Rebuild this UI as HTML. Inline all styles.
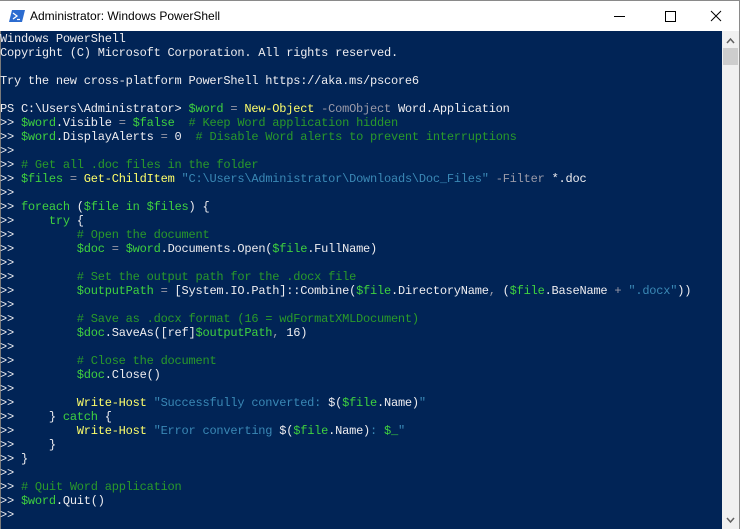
<!DOCTYPE html>
<html><head><meta charset="utf-8"><style>
html,body{margin:0;padding:0;width:740px;height:529px;overflow:hidden;background:#fff;}
.title{position:absolute;left:0;top:0;width:740px;height:31px;background:#fff;border-top:1px solid #8a8a8a;box-sizing:border-box;}
.title .t{position:absolute;left:30px;top:8px;font:12px "Liberation Sans",sans-serif;color:#000;}
.con{position:absolute;left:0;top:31px;width:722px;height:498px;background:#012456;border-left:1px solid #7a7a7a;box-sizing:border-box;}
pre{margin:0;position:absolute;left:0;top:32px;font:12px/14px "Liberation Mono",monospace;letter-spacing:-0.22px;color:#eeedf0;}
.sb{position:absolute;left:722px;top:31px;width:17px;height:498px;background:#f0f0f0;}
.rb{position:absolute;left:739px;top:0;width:1px;height:529px;background:#8a8a8a;}
.v{color:#3fd13f}.c{color:#ffff6a}.m{color:#2a9a2a}.s{color:#3a88b5}.o{color:#9a9aa8}
</style></head><body>
<div class="title">
<svg style="position:absolute;left:9px;top:9px" width="16" height="12" viewBox="0 0 16 12"><polygon points="3,0 16,0 13,12 0,12" fill="#2c6cd0"/><polyline points="4,3 8,6 4,9" fill="none" stroke="#fff" stroke-width="1.3"/><line x1="8" y1="9.5" x2="11" y2="9.5" stroke="#fff" stroke-width="1.2"/></svg>
<div class="t">Administrator: Windows PowerShell</div>
<svg style="position:absolute;left:600px;top:0" width="140" height="31" viewBox="0 0 140 31"><line x1="14" y1="15.5" x2="25" y2="15.5" stroke="#000" stroke-width="1"/><rect x="65.5" y="10.5" width="10" height="10" fill="none" stroke="#000"/><path d="M111 10 L121 20 M121 10 L111 20" stroke="#000" stroke-width="1"/></svg>
</div>
<div class="con"></div>
<pre>Windows PowerShell
Copyright (C) Microsoft Corporation. All rights reserved.

Try the new cross-platform PowerShell https://aka.ms/pscore6

PS C:\Users\Administrator&gt; <span class="v">$word</span> <span class="o">=</span> <span class="c">New-Object</span> <span class="o">-ComObject</span> Word.Application
&gt;&gt; <span class="v">$word</span>.Visible <span class="o">=</span> <span class="v">$false</span>  <span class="m"># Keep Word application hidden</span>
&gt;&gt; <span class="v">$word</span>.DisplayAlerts <span class="o">=</span> 0  <span class="m"># Disable Word alerts to prevent interruptions</span>
&gt;&gt;
&gt;&gt; <span class="m"># Get all .doc files in the folder</span>
&gt;&gt; <span class="v">$files</span> <span class="o">=</span> <span class="c">Get-ChildItem</span> <span class="s">"C:\Users\Administrator\Downloads\Doc_Files"</span> <span class="o">-Filter</span> *.doc
&gt;&gt;
&gt;&gt; <span class="v">foreach</span> (<span class="v">$file</span> <span class="v">in</span> <span class="v">$files</span>) {
&gt;&gt;     <span class="v">try</span> {
&gt;&gt;         <span class="m"># Open the document</span>
&gt;&gt;         <span class="v">$doc</span> <span class="o">=</span> <span class="v">$word</span>.Documents.Open(<span class="v">$file</span>.FullName)
&gt;&gt;
&gt;&gt;         <span class="m"># Set the output path for the .docx file</span>
&gt;&gt;         <span class="v">$outputPath</span> <span class="o">=</span> [System.IO.Path]::Combine(<span class="v">$file</span>.DirectoryName<span class="o">,</span> (<span class="v">$file</span>.BaseName <span class="o">+</span> <span class="s">".docx"</span>))
&gt;&gt;
&gt;&gt;         <span class="m"># Save as .docx format (16 = wdFormatXMLDocument)</span>
&gt;&gt;         <span class="v">$doc</span>.SaveAs([ref]<span class="v">$outputPath</span><span class="o">,</span> 16)
&gt;&gt;
&gt;&gt;         <span class="m"># Close the document</span>
&gt;&gt;         <span class="v">$doc</span>.Close()
&gt;&gt;
&gt;&gt;         <span class="c">Write-Host</span> <span class="s">"Successfully converted: </span>$(<span class="v">$file</span>.Name)<span class="s">"</span>
&gt;&gt;     } <span class="v">catch</span> {
&gt;&gt;         <span class="c">Write-Host</span> <span class="s">"Error converting </span>$(<span class="v">$file</span>.Name)<span class="s">: </span><span class="v">$_</span><span class="s">"</span>
&gt;&gt;     }
&gt;&gt; }
&gt;&gt;
&gt;&gt; <span class="m"># Quit Word application</span>
&gt;&gt; <span class="v">$word</span>.Quit()
&gt;&gt;</pre>
<div class="sb">
<svg style="position:absolute;left:0;top:0" width="17" height="498" viewBox="0 0 17 498"><polyline points="5,12 8.5,8 12,12" fill="none" stroke="#606060" stroke-width="1.5"/><rect x="1" y="17" width="15" height="17" fill="#cdcdcd"/><polyline points="5,487 8.5,491 12,487" fill="none" stroke="#606060" stroke-width="1.5"/></svg>
</div>
<div class="rb"></div>
</body></html>
